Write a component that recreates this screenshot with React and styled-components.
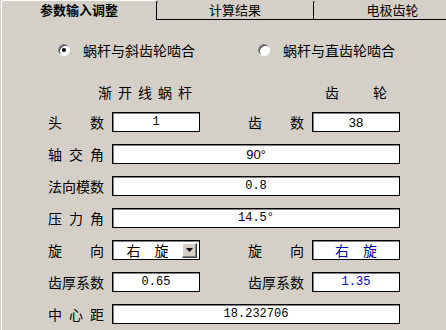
import React from 'react'
import styled, { createGlobalStyle } from 'styled-components'

const Global = createGlobalStyle`
  body { margin:0; background:#d4d0c8; overflow:hidden; }
`

const Frame = styled.div`
  width:446px;
  height:330px;
  overflow:hidden;
  background:#d4d0c8;
  padding-left:1px;
  box-sizing:border-box;
  font-family:"Noto Sans CJK SC", sans-serif;
  color:#000;
`
const TabBar = styled.div`
  display:flex;
  height:20px;
  white-space:nowrap;
`
const Tab = styled.div`
  flex:0 0 ${p => p.w}px;
  box-sizing:border-box;
  height:20px;
  display:flex;
  align-items:center;
  justify-content:center;
  font-size:13px;
  line-height:1;
  font-weight:${p => (p.active ? 700 : 400)};
  border-left:1px solid ${p => (p.active ? '#fff' : '#000')};
  border-top:1px solid ${p => (p.active ? '#fff' : '#d4d0c8')};
  border-bottom:1px solid ${p => (p.active ? 'transparent' : '#000')};
  border-top-left-radius:3px;
  padding-bottom:1px;
`
const Panel = styled.div`
  height:310px;
  box-sizing:border-box;
  border-left:1px solid #fff;
  padding:20px 0 0 46px;
`
const RadioRow = styled.div`
  display:flex;
  height:20px;
  align-items:center;
  margin-left:10px;
`
const Option = styled.label`
  display:flex;
  align-items:center;
  width:${p => p.w}px;
  font-size:14px;
  gap:13px;
`
const Radio = styled.span`
  width:12px;
  height:12px;
  box-sizing:border-box;
  border-radius:50%;
  border:1px solid;
  border-color:#808080 #fff #fff #808080;
  background:#fff;
  box-shadow:inset 1px 1px 0 #404040;
  display:flex;
  align-items:center;
  justify-content:center;
  &::after {
    content:'';
    width:4px;
    height:4px;
    border-radius:50%;
    background:${p => (p.checked ? '#000' : 'transparent')};
  }
`
const HeaderRow = styled.div`
  display:flex;
  height:18px;
  align-items:center;
  margin-top:23px;
  font-size:14px;
`
const Heading = styled.span`
  width:${p => p.w}px;
  margin-left:${p => p.ml || 0}px;
  letter-spacing:${p => p.ls}px;
`
const Form = styled.div`
  display:flex;
  flex-direction:column;
  gap:12px;
  margin-top:11px;
`
const Row = styled.div`
  display:flex;
  gap:48px;
  height:20px;
`
const Field = styled.div`
  display:flex;
  align-items:center;
`
const LabelBox = styled.div`
  width:56px;
  margin-right:8px;
  display:flex;
  justify-content:space-between;
  font-size:14px;
  line-height:1;
`
const Box = styled.div`
  width:${p => (p.wide ? 288 : 88)}px;
  height:20px;
  box-sizing:border-box;
  background:#fff;
  border:1px solid #000;
  box-shadow:inset 1px 1px 0 #808080;
  display:flex;
  align-items:center;
  justify-content:center;
  color:${p => (p.blue ? '#0000a8' : '#000')};
  font-family:${p => (p.mono ? '"Liberation Mono", monospace' : '"Liberation Sans", sans-serif')};
  font-size:${p => (p.mono ? 12 : 13)}px;
`
const CjkText = styled.span`
  font-family:"Noto Sans CJK SC", sans-serif;
  font-size:14px;
`
const Combo = styled(Box)`
  justify-content:space-between;
  padding:1px 2px 1px 0;
`
const ComboText = styled(CjkText)`
  flex:1;
  text-align:center;
`
const DropButton = styled.span`
  width:15px;
  height:15px;
  box-sizing:border-box;
  background:#d4d0c8;
  border:1px solid;
  border-color:#fff #404040 #404040 #fff;
  box-shadow:inset -1px -1px 0 #808080;
  display:flex;
  align-items:center;
  justify-content:center;
`

const Label = ({ text }) => (
  <LabelBox>
    {[...text].map((c, i) => (
      <span key={i}>{c}</span>
    ))}
  </LabelBox>
)

const Input = ({ label, children, ...rest }) => (
  <Field>
    <Label text={label} />
    <Box {...rest}>{children}</Box>
  </Field>
)

export default function App() {
  return (
    <Frame>
      <Global />
      <TabBar>
        <Tab active w={155}>参数输入调整</Tab>
        <Tab w={157}>计算结果</Tab>
        <Tab w={158}>电极齿轮</Tab>
      </TabBar>
      <Panel>
        <RadioRow>
          <Option w={200}>
            <Radio checked />
            蜗杆与斜齿轮啮合
          </Option>
          <Option w={160}>
            <Radio />
            蜗杆与直齿轮啮合
          </Option>
        </RadioRow>
        <HeaderRow>
          <Heading w={227} ml={50} ls={6}>渐开线蜗杆</Heading>
          <Heading ls={34}>齿轮</Heading>
        </HeaderRow>
        <Form>
          <Row>
            <Input label="头数" mono>1</Input>
            <Input label="齿数">38</Input>
          </Row>
          <Row>
            <Input label="轴交角" wide>90°</Input>
          </Row>
          <Row>
            <Input label="法向模数" wide mono>0.8</Input>
          </Row>
          <Row>
            <Input label="压力角" wide mono>14.5°</Input>
          </Row>
          <Row>
            <Field>
              <Label text="旋向" />
              <Combo>
                <ComboText>右　旋</ComboText>
                <DropButton>
                  <svg width="7" height="4" viewBox="0 0 7 4">
                    <path d="M0 0h7L3.5 4z" fill="#000" />
                  </svg>
                </DropButton>
              </Combo>
            </Field>
            <Input label="旋向" blue>
              <CjkText>右　旋</CjkText>
            </Input>
          </Row>
          <Row>
            <Input label="齿厚系数" mono>0.65</Input>
            <Input label="齿厚系数" mono blue>1.35</Input>
          </Row>
          <Row>
            <Input label="中心距" wide mono>18.232706</Input>
          </Row>
        </Form>
      </Panel>
    </Frame>
  )
}
